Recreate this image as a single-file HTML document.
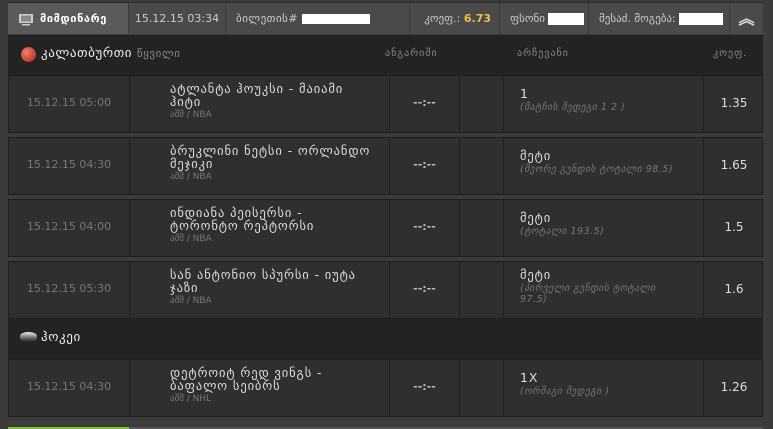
<!DOCTYPE html><html><head><meta charset="utf-8"><style>
*{margin:0;padding:0;box-sizing:border-box}
body{width:773px;height:429px;background:#3b3b3b;font-family:"DejaVu Sans","Liberation Sans",sans-serif;overflow:hidden;position:relative;color:#ddd}
.a{position:absolute}
.hd{left:8px;top:2px;width:755px;height:32px;background:#4a4a4a;border-top:1px solid #2a2a2a}
.hc{position:absolute;top:0;height:31px;line-height:31px;font-size:11px;color:#ccc;border-right:1px solid #3a3a3a;white-space:nowrap;overflow:hidden}
.sec{left:8px;width:755px;height:40px;background:#232323;font-size:13px;color:#eee;line-height:38px;letter-spacing:0.6px}
.row{left:8px;width:755px;height:58px;background:#2f2f2f;border:1px solid #1e1e1e}
.row div{position:absolute;top:0;height:56px;border-right:1px solid #1e1e1e}
.t{left:0;width:121px;text-align:center;line-height:54px;font-size:11px;color:#777}
.n{left:121px;width:260px;padding:6px 18px 0 40px;font-size:12.5px;color:#ddd;line-height:13px;letter-spacing:0.9px}
.n small{display:block;font-size:9px;color:#777;margin-top:2px;letter-spacing:0;line-height:11px}
.s{left:381px;width:70px;text-align:center;line-height:54px;font-size:11px;color:#bbb;font-weight:bold}
.e{left:451px;width:44px}
.c{left:495px;width:200px;padding:11px 20px 0 16px;font-size:12.5px;color:#ddd;line-height:13px;letter-spacing:0.9px}
.c i{display:block;font-size:9.5px;color:#777;margin-top:2px;letter-spacing:0.5px;line-height:11px}
.o{left:695px;width:60px;text-align:center;line-height:54px;font-size:12px;color:#ddd;border-right:none!important}
.lab{font-size:10px;color:#888;letter-spacing:1px}
</style></head><body>
<div class="a hd">
 <div class="hc" style="left:0;width:121px;background:#5a5a5a;color:#fff;font-weight:bold;padding-left:10px;letter-spacing:0.6px">
  <svg style="vertical-align:middle;margin-right:6px" width="16" height="13" viewBox="0 0 16 13"><rect x="1" y="1" width="14" height="9" fill="#ccc"/><rect x="3" y="2.5" width="10" height="6" fill="#888"/><rect x="4" y="11" width="8" height="1.5" fill="#ccc"/></svg>მიმდინარე</div>
 <div class="hc" style="left:121px;width:97px;text-align:center">15.12.15 03:34</div>
 <div class="hc" style="left:218px;width:184px;padding-left:10px;letter-spacing:0.5px">ბილეთის# <span style="display:inline-block;width:68px;height:10px;background:#fff;vertical-align:middle"></span></div>
 <div class="hc" style="left:402px;width:90px;text-align:right;padding-right:8px">კოეფ.: <b style="color:#f0c040">6.73</b></div>
 <div class="hc" style="left:492px;width:89px;padding-left:10px">ფსონი <span style="display:inline-block;width:36px;height:12px;background:#fff;vertical-align:middle"></span></div>
 <div class="hc" style="left:581px;width:141px;padding-left:10px">მესაძ. მოგება: <span style="display:inline-block;width:44px;height:12px;background:#fff;vertical-align:middle"></span></div>
 <div class="hc" style="left:722px;width:33px;border:none;text-align:center;font-size:16px;color:#ddd;font-weight:bold">︽</div>
</div>
<div class="a sec" style="top:35px">
 <span class="a" style="left:13px;top:12px;width:15px;height:15px;border-radius:50%;background:radial-gradient(circle at 35% 35%,#f08070,#b02010)"></span>
 <span class="a" style="left:33px">კალათბურთი <span style="color:#888;font-size:11px">წყვილი</span></span>
 <span class="a lab" style="left:377px">ანგარიში</span>
 <span class="a lab" style="left:509px">არჩევანი</span>
 <span class="a lab" style="left:705px">კოეფ.</span>
</div>
<div class="a row" style="top:75px"><div class="t">15.12.15 05:00</div><div class="n">ატლანტა ჰოუკსი - მაიამი ჰიტი<small>აშშ / NBA</small></div><div class="s">--:--</div><div class="e"></div><div class="c">1<i>(მატჩის შედეგი 1 2 )</i></div><div class="o">1.35</div></div>
<div class="a row" style="top:137px"><div class="t">15.12.15 04:30</div><div class="n">ბრუკლინი ნეტსი - ორლანდო მეჯიკი<small>აშშ / NBA</small></div><div class="s">--:--</div><div class="e"></div><div class="c">მეტი<i>(მეორე გუნდის ტოტალი 98.5)</i></div><div class="o">1.65</div></div>
<div class="a row" style="top:199px"><div class="t">15.12.15 04:00</div><div class="n">ინდიანა პეისერსი - ტორონტო რეპტორსი<small>აშშ / NBA</small></div><div class="s">--:--</div><div class="e"></div><div class="c">მეტი<i>(ტოტალი 193.5)</i></div><div class="o">1.5</div></div>
<div class="a row" style="top:261px"><div class="t">15.12.15 05:30</div><div class="n">სან ანტონიო სპურსი - იუტა ჯაზი<small>აშშ / NBA</small></div><div class="s">--:--</div><div class="e"></div><div class="c" style="padding-top:6px">მეტი<i>(პირველი გუნდის ტოტალი 97.5)</i></div><div class="o">1.6</div></div>
<div class="a sec" style="top:319px">
 <span class="a" style="left:12px;top:13px;width:17px;height:10px;border-radius:50%/40%;background:linear-gradient(#eee,#666 60%,#222)"></span>
 <span class="a" style="left:33px">ჰოკეი</span>
</div>
<div class="a row" style="top:359px"><div class="t">15.12.15 04:30</div><div class="n">დეტროიტ რედ ვინგს - ბაფალო სეიბრს<small>აშშ / NHL</small></div><div class="s">--:--</div><div class="e"></div><div class="c">1X<i>(ორმაგი შედეგი )</i></div><div class="o">1.26</div></div>
<div class="a" style="left:8px;top:427px;width:121px;height:2px;background:#7ac230"></div>
<div class="a" style="left:129px;top:427px;width:634px;height:2px;background:#555"></div>
</body></html>
